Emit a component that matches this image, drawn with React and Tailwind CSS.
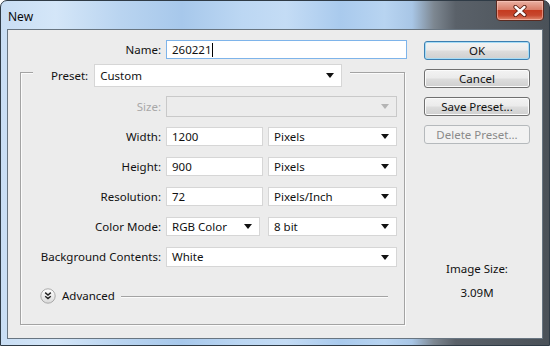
import React from "react";

const font = { fontFamily: '"Noto Sans", "Liberation Sans", sans-serif' };

function Arrow({ disabled }) {
  return (
    <svg width="8" height="5" viewBox="0 0 8 5" className="shrink-0">
      <path d="M0 0 H8 L4 5 Z" fill={disabled ? "#b4b4b4" : "#111"} />
    </svg>
  );
}

function Select({ w, h = "h-[19px]", text, disabled }) {
  return (
    <div
      className={`${w} ${h} flex items-center justify-between border pl-[5px] pr-[7px] ${
        disabled ? "bg-[#ececec] border-[#c9c9c9]" : "bg-white border-[#d6d6d6]"
      }`}
    >
      <span className="leading-none text-[#111]">{text}</span>
      <Arrow disabled={disabled} />
    </div>
  );
}

function Input({ w, value }) {
  return (
    <div className={`${w} h-[19px] flex items-center bg-white border border-[#d6d6d6] pl-[5px]`}>
      <span className="leading-none text-[#111]">{value}</span>
    </div>
  );
}

function Row({ label, children, className = "", h = "h-[19px]", muted }) {
  return (
    <div className={`flex items-center ${h} ${className}`}>
      <div className={`w-[140px] text-right ${muted ? "text-[#a8a8a8]" : "text-[#111]"}`}>{label}</div>
      <div className="ml-[5px] flex items-center gap-[5px]">{children}</div>
    </div>
  );
}

function Button({ children, primary, disabled }) {
  const base = "w-[106px] h-[19px] flex items-center justify-center rounded-[3px] border leading-none";
  if (disabled)
    return <div className={`${base} border-[#b5b9bc] bg-[#f2f2f2] text-[#8a8a8a]`}>{children}</div>;
  return (
    <div
      className={`${base} ${
        primary
          ? "border-[#3c7fb1] shadow-[inset_0_0_0_1px_#a6dcf6]"
          : "border-[#707070] shadow-[inset_0_0_0_1px_#fbfbfb]"
      } bg-[linear-gradient(180deg,#f3f3f3_0%,#ebebeb_48%,#dddddd_52%,#cfcfcf_100%)] text-[#111]`}
    >
      {children}
    </div>
  );
}

export default function App() {
  return (
    <div className="w-[550px] h-[346px] text-[11.5px]" style={font}>
      <div className="w-[550px] h-[346px] flex flex-col rounded-t-[7px] border border-[#2f3b46] bg-[linear-gradient(90deg,#c9def4_0%,#d4e6f8_10%,#b9d4f0_22%,#a7c8eb_33%,#bcd7f3_44%,#c4dcf5_52%,#a9caed_62%,#b8d4f1_70%,#a8c6e6_75%,#7d8791_79%,#5a6169_83%,#4a5158_100%)]">
        {/* title bar */}
        <div className="h-[28px] flex items-start">
          <div className="pl-[7px] pt-[7px] text-[12px] text-[#0b0b0b]">New</div>
          <div className="ml-auto mr-[5px] -mt-[1px] w-[48px] h-[21px] flex items-center justify-center rounded-b-[4px] border border-[#5a2a20] bg-[linear-gradient(180deg,#eab1a3_0%,#d97e69_45%,#c53b20_50%,#c7472e_75%,#e08a6f_100%)] shadow-[inset_0_0_0_1px_rgba(255,210,200,0.5)]">
            <svg width="14" height="12" viewBox="0 0 14 12">
              <path d="M2.5 2 L11.5 10 M11.5 2 L2.5 10" stroke="#5a1d12" strokeWidth="4.2" strokeLinecap="round" />
              <path d="M2.5 2 L11.5 10 M11.5 2 L2.5 10" stroke="#fff" strokeWidth="2.4" strokeLinecap="round" />
            </svg>
          </div>
        </div>

        {/* client area */}
        <div className="mx-[6px] h-[310px] border border-[#687581] bg-[#ececec] flex">
          {/* left part */}
          <div className="w-[416px] pt-[10px]">
            <div className="flex items-center h-[19px]">
              <div className="w-[153px] text-right text-[#111]">Name:</div>
              <div className="ml-[5px] w-[241px] h-[19px] flex items-center bg-white border border-[#7eb4ea] pl-[5px]">
                <span className="leading-none text-[#111]">260221</span>
                <span className="w-px h-[14px] bg-black ml-px" />
              </div>
            </div>

            <div className="relative mt-[13px] ml-[12px] w-[385px] h-[253px] border border-[#a3a3a3] shadow-[inset_1px_1px_0_#fbfbfb,1px_1px_0_#fbfbfb] pt-[23px]">
              {/* legend */}
              <div className="absolute left-[12px] -top-[9px] w-[317px] flex items-center bg-[#ececec] pl-[18px]">
                <span className="text-[#111]">Preset:</span>
                <div className="ml-[6px]">
                  <Select w="w-[248px]" h="h-[23px]" text="Custom" />
                </div>
              </div>

              <Row label="Size:" h="h-[21px]" muted>
                <Select w="w-[231px]" h="h-[21px]" text="" disabled />
              </Row>
              <Row label="Width:" className="mt-[10px]">
                <Input w="w-[97px]" value="1200" />
                <Select w="w-[129px]" text="Pixels" />
              </Row>
              <Row label="Height:" className="mt-[11px]">
                <Input w="w-[97px]" value="900" />
                <Select w="w-[129px]" text="Pixels" />
              </Row>
              <Row label="Resolution:" className="mt-[11px]">
                <Input w="w-[97px]" value="72" />
                <Select w="w-[129px]" text="Pixels/Inch" />
              </Row>
              <Row label="Color Mode:" className="mt-[11px]">
                <Select w="w-[94px]" text="RGB Color" />
                <div className="ml-[3px]">
                  <Select w="w-[129px]" text="8 bit" />
                </div>
              </Row>
              <Row label="Background Contents:" h="h-[20px]" className="mt-[11px]">
                <Select w="w-[231px]" h="h-[20px]" text="White" />
              </Row>

              <div className="mt-[21px] ml-[19px] flex items-center h-[16px]">
                <svg width="16" height="16" viewBox="0 0 16 16">
                  <defs>
                    <linearGradient id="adv" x1="0" y1="0" x2="0" y2="1">
                      <stop offset="0" stopColor="#ffffff" />
                      <stop offset="1" stopColor="#d9d9d9" />
                    </linearGradient>
                  </defs>
                  <circle cx="8" cy="8" r="7.2" fill="url(#adv)" stroke="#a9a9a9" />
                  <path d="M5.2 4.6 L8 7 L10.8 4.6 M5.2 8.2 L8 10.6 L10.8 8.2" fill="none" stroke="#222" strokeWidth="1.4" />
                </svg>
                <span className="ml-[6px] text-[#111]">Advanced</span>
                <div className="ml-[6px] w-[267px] h-px bg-[#a3a3a3] shadow-[0_1px_0_#fbfbfb]" />
              </div>
            </div>
          </div>

          {/* right column */}
          <div className="w-[106px] pt-[11px] flex flex-col">
            <div className="flex flex-col gap-[9px]">
              <Button primary>OK</Button>
              <Button>Cancel</Button>
              <Button>Save Preset...</Button>
              <Button disabled>Delete Preset...</Button>
            </div>
            <div className="mt-[117px] text-center leading-[15px] text-[#111]">Image Size:</div>
            <div className="mt-[9px] text-center leading-[15px] text-[#111]">3.09M</div>
          </div>
        </div>
      </div>
    </div>
  );
}
